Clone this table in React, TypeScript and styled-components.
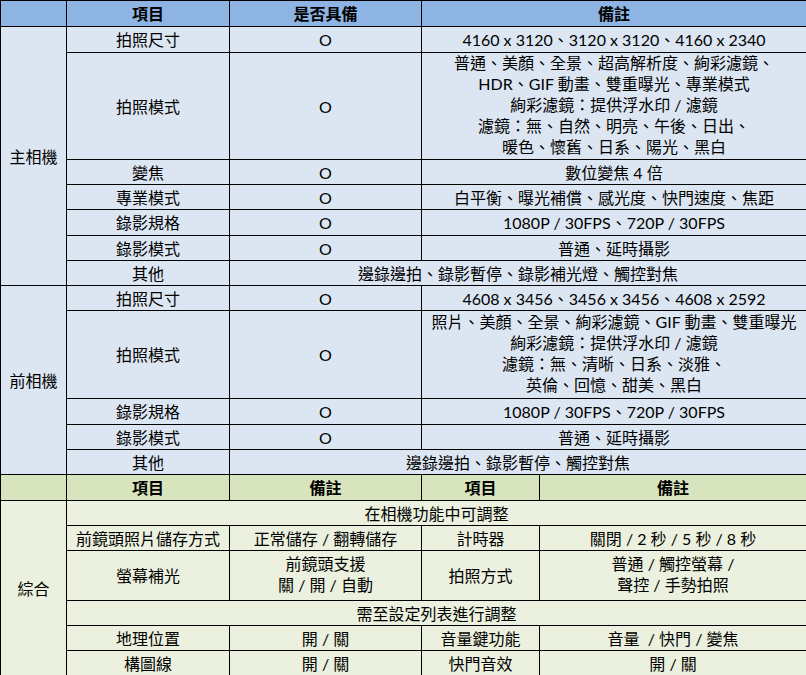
import React from "react";
import styled, { createGlobalStyle } from "styled-components";

const Global = createGlobalStyle`
  html, body { margin: 0; padding: 0; overflow: hidden; background: #ffffff; }
  body { font-family: "Lato", "Noto Sans CJK TC", sans-serif; }
`;

const ROWS = [25, 25, 106, 24, 24, 25, 24, 24, 24, 87, 25, 24, 24, 25, 24, 24, 49, 24, 24, 24];

const Sheet = styled.div`
  display: grid;
  width: 806px;
  box-sizing: border-box;
  padding: 1px 0 0 1px;
  gap: 1px;
  background: #000000;
  grid-template-columns: 65px 162px 191px 117px 266px;
  grid-template-rows: ${ROWS.map((r) => `${r}px`).join(" ")};
  font-family: "Lato", "Noto Sans CJK TC", sans-serif;
  font-size: 16px;
  color: #000000;
`;

type Tone = "blueHead" | "blue" | "greenHead" | "green";

const bg: Record<Tone, string> = {
  blueHead: "#8eb4e3",
  blue: "#dce6f2",
  greenHead: "#d7e4bd",
  green: "#ebf1de",
};

const Cell = styled.div<{ $tone: Tone; $cols?: number; $rows?: number; $bold?: boolean }>`
  background: ${(p) => bg[p.$tone]};
  grid-column: span ${(p) => p.$cols ?? 1};
  grid-row: span ${(p) => p.$rows ?? 1};
  display: flex;
  flex-direction: column;
  align-items: center;
  justify-content: center;
  text-align: center;
  white-space: nowrap;
  line-height: 21px;
  font-weight: ${(p) => (p.$bold ? 700 : 400)};
  overflow: hidden;
`;

const Stack = styled.div<{ $multi: boolean }>`
  display: flex;
  flex-direction: column;
  align-items: center;
  padding-bottom: ${(p) => (p.$multi ? 4 : 0)}px;
`;

const Line = styled.span`
  display: block;
`;

type Row = { item: string; has?: string; note: string[]; full?: boolean };

const mainRows: Row[] = [
  { item: "拍照尺寸", has: "O", note: ["4160 x 3120、3120 x 3120、4160 x 2340"] },
  {
    item: "拍照模式",
    has: "O",
    note: [
      "普通、美顏、全景、超高解析度、絢彩濾鏡、",
      "HDR、GIF 動畫、雙重曝光、專業模式",
      "絢彩濾鏡：提供浮水印 / 濾鏡",
      "濾鏡：無、自然、明亮、午後、日出、",
      "暖色、懷舊、日系、陽光、黑白",
    ],
  },
  { item: "變焦", has: "O", note: ["數位變焦 4 倍"] },
  { item: "專業模式", has: "O", note: ["白平衡、曝光補償、感光度、快門速度、焦距"] },
  { item: "錄影規格", has: "O", note: ["1080P / 30FPS、720P / 30FPS"] },
  { item: "錄影模式", has: "O", note: ["普通、延時攝影"] },
  { item: "其他", note: ["邊錄邊拍、錄影暫停、錄影補光燈、觸控對焦"], full: true },
];

const frontRows: Row[] = [
  { item: "拍照尺寸", has: "O", note: ["4608 x 3456、3456 x 3456、4608 x 2592"] },
  {
    item: "拍照模式",
    has: "O",
    note: [
      "照片、美顏、全景、絢彩濾鏡、GIF 動畫、雙重曝光",
      "絢彩濾鏡：提供浮水印 / 濾鏡",
      "濾鏡：無、清晰、日系、淡雅、",
      "英倫、回憶、甜美、黑白",
    ],
  },
  { item: "錄影規格", has: "O", note: ["1080P / 30FPS、720P / 30FPS"] },
  { item: "錄影模式", has: "O", note: ["普通、延時攝影"] },
  { item: "其他", note: ["邊錄邊拍、錄影暫停、觸控對焦"], full: true },
];

type Pair = { a: string; av: string[]; b: string; bv: string[] };
type GeneralRow = { banner: string } | Pair;

const generalRows: GeneralRow[] = [
  { banner: "在相機功能中可調整" },
  { a: "前鏡頭照片儲存方式", av: ["正常儲存 / 翻轉儲存"], b: "計時器", bv: ["關閉 / 2 秒 / 5 秒 / 8 秒"] },
  {
    a: "螢幕補光",
    av: ["前鏡頭支援", "關 / 開 / 自動"],
    b: "拍照方式",
    bv: ["普通 / 觸控螢幕 /", "聲控 / 手勢拍照"],
  },
  { banner: "需至設定列表進行調整" },
  { a: "地理位置", av: ["開 / 關"], b: "音量鍵功能", bv: ["音量\u00a0 / 快門 / 變焦"] },
  { a: "構圖線", av: ["開 / 關"], b: "快門音效", bv: ["開 / 關"] },
];

const Lines = ({ lines }: { lines: string[] }) => (
  <Stack $multi={lines.length > 1}>
    {lines.map((l, i) => (
      <Line key={i}>{l}</Line>
    ))}
  </Stack>
);

const CameraSection = ({ label, rows }: { label: string; rows: Row[] }) => (
  <>
    <Cell $tone="blue" $rows={rows.length}>
      {label}
    </Cell>
    {rows.map((r, i) => (
      <React.Fragment key={i}>
        <Cell $tone="blue">{r.item}</Cell>
        {r.full ? (
          <Cell $tone="blue" $cols={3}>
            <Lines lines={r.note} />
          </Cell>
        ) : (
          <>
            <Cell $tone="blue">{r.has}</Cell>
            <Cell $tone="blue" $cols={2}>
              <Lines lines={r.note} />
            </Cell>
          </>
        )}
      </React.Fragment>
    ))}
  </>
);

export default function App() {
  return (
    <>
      <Global />
      <Sheet>
        <Cell $tone="blueHead" />
        <Cell $tone="blueHead" $bold>項目</Cell>
        <Cell $tone="blueHead" $bold>是否具備</Cell>
        <Cell $tone="blueHead" $bold $cols={2}>備註</Cell>

        <CameraSection label="主相機" rows={mainRows} />
        <CameraSection label="前相機" rows={frontRows} />

        <Cell $tone="greenHead" />
        <Cell $tone="greenHead" $bold>項目</Cell>
        <Cell $tone="greenHead" $bold>備註</Cell>
        <Cell $tone="greenHead" $bold>項目</Cell>
        <Cell $tone="greenHead" $bold>備註</Cell>

        <Cell $tone="green" $rows={generalRows.length}>綜合</Cell>
        {generalRows.map((r, i) =>
          "banner" in r ? (
            <Cell key={i} $tone="green" $cols={4}>
              {r.banner}
            </Cell>
          ) : (
            <React.Fragment key={i}>
              <Cell $tone="green">{r.a}</Cell>
              <Cell $tone="green">
                <Lines lines={r.av} />
              </Cell>
              <Cell $tone="green">{r.b}</Cell>
              <Cell $tone="green">
                <Lines lines={r.bv} />
              </Cell>
            </React.Fragment>
          )
        )}
      </Sheet>
    </>
  );
}
